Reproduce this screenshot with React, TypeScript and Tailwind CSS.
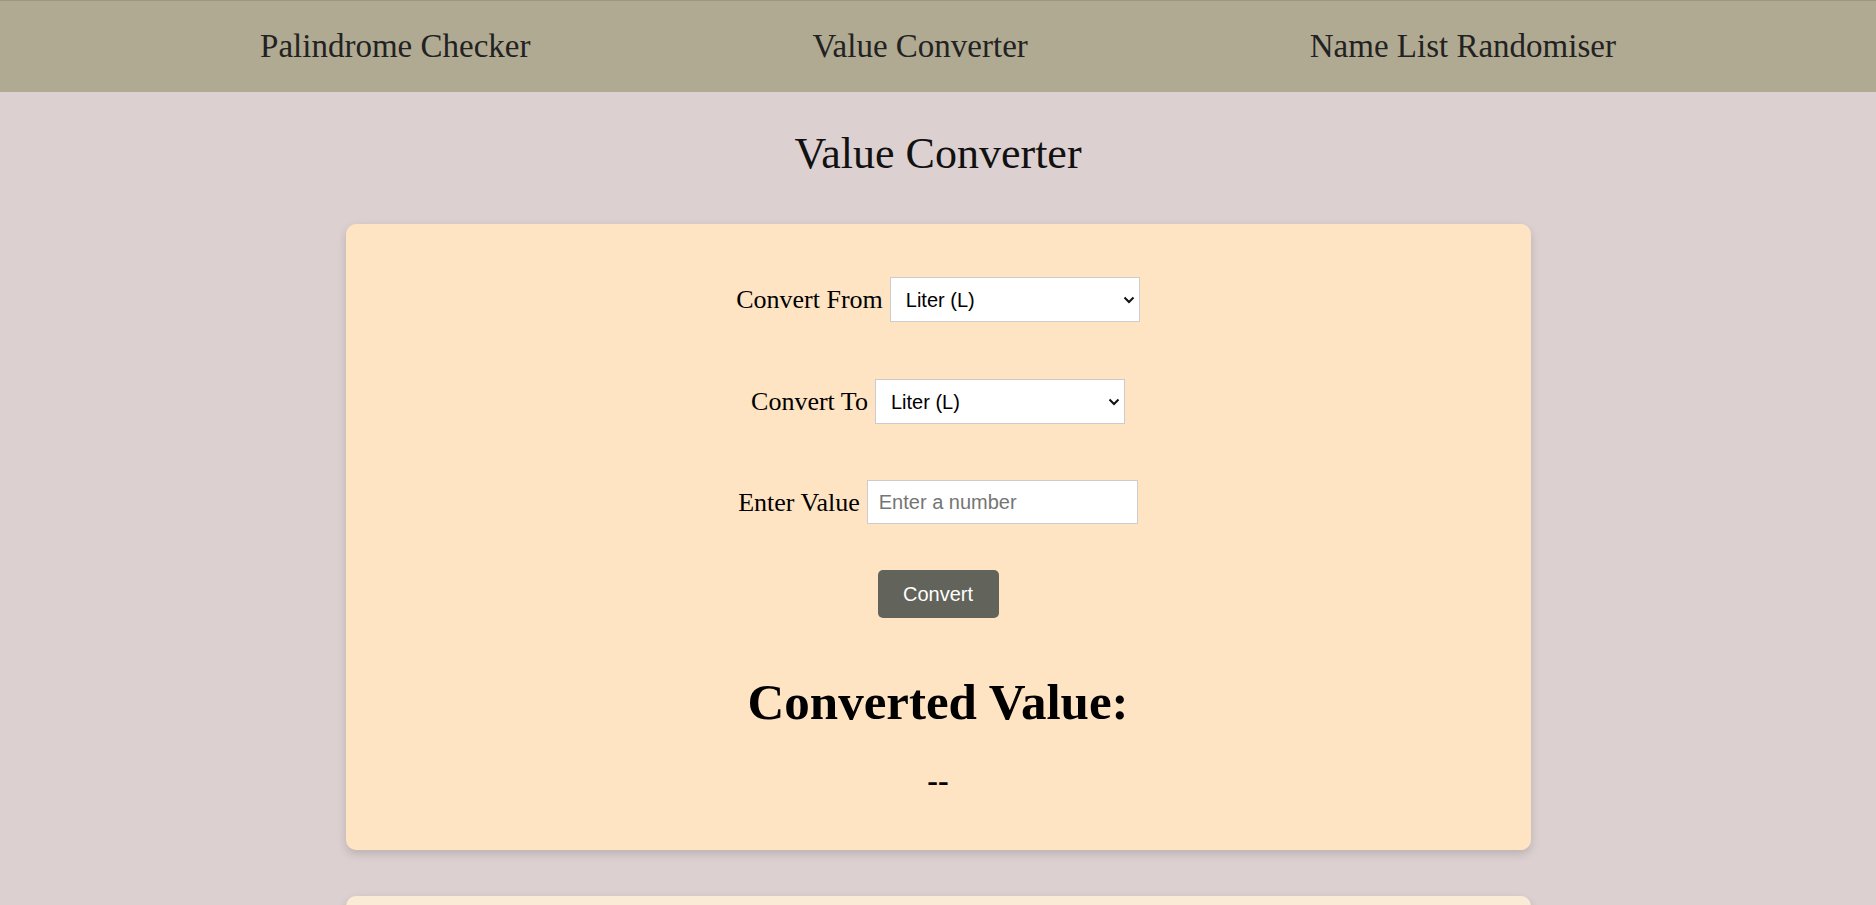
import React from "react";

const serif = { fontFamily: '"Liberation Serif", "Times New Roman", serif' };

function Chevron() {
  return (
    <svg
      width="12"
      height="8"
      viewBox="0 0 12 8"
      className="pointer-events-none absolute right-[5px] top-1/2 -translate-y-1/2"
    >
      <path d="M1.5 1.5 L6 6 L10.5 1.5" fill="none" stroke="#111" strokeWidth="2" />
    </svg>
  );
}

function Select() {
  return (
    <div className="relative">
      <select
        defaultValue="L"
        className="block h-[45px] w-[250px] appearance-none border border-[#cccccc] bg-white pl-[15px] text-[20px] text-black outline-none font-['Liberation_Sans',Arial,sans-serif]"
      >
        <option value="L">Liter (L)</option>
        <option value="mL">Milliliter (mL)</option>
        <option value="gal">Gallon (gal)</option>
      </select>
      <Chevron />
    </div>
  );
}

export default function App() {
  return (
    <div className="min-h-[905px] w-full bg-[#dcd0d0]" style={serif}>
      <nav className="flex h-[92px] items-center justify-center gap-[282px] border-t border-[#9c977f] bg-[#b1aa92] text-[33px] text-[#222222]">
        <span>Palindrome Checker</span>
        <span>Value Converter</span>
        <span>Name List Randomiser</span>
      </nav>

      <h1 className="mt-[38px] text-center text-[44px] leading-[48px] text-[#111111]">Value Converter</h1>

      <div className="mx-auto mt-[46px] w-[1185px] rounded-[10px] bg-[#ffe4c4] pt-[53px] pb-[50px] shadow-[0_4px_10px_rgba(0,0,0,0.15)]">
        <div className="flex items-center justify-center gap-[7px]">
          <label className="text-[26px] text-black">Convert From</label>
          <Select />
        </div>
        <div className="mt-[57px] flex items-center justify-center gap-[7px]">
          <label className="text-[26px] text-black">Convert To</label>
          <Select />
        </div>
        <div className="mt-[56px] flex items-center justify-center gap-[7px]">
          <label className="text-[26px] text-black">Enter Value</label>
          <input
            type="text"
            placeholder="Enter a number"
            className="h-[44px] w-[271px] border border-[#cccccc] bg-white px-[11px] text-[20px] text-black outline-none placeholder:text-[#757575] font-['Liberation_Sans',Arial,sans-serif]"
          />
        </div>
        <div className="mt-[46px] flex justify-center">
          <button className="h-[48px] w-[121px] rounded-[5px] bg-[#62635a] text-[20px] text-white font-['Liberation_Sans',Arial,sans-serif]">
            Convert
          </button>
        </div>
        <h2 className="mt-[56px] text-center text-[51px] font-bold leading-[56px] text-black">Converted Value:</h2>
        <p className="mt-[30px] text-center text-[32px] font-bold leading-[40px] text-black">--</p>
      </div>

      <div className="mx-auto mt-[46px] h-[120px] w-[1185px] rounded-[10px] bg-[#faebd7] shadow-[0_4px_10px_rgba(0,0,0,0.15)]" />
    </div>
  );
}
